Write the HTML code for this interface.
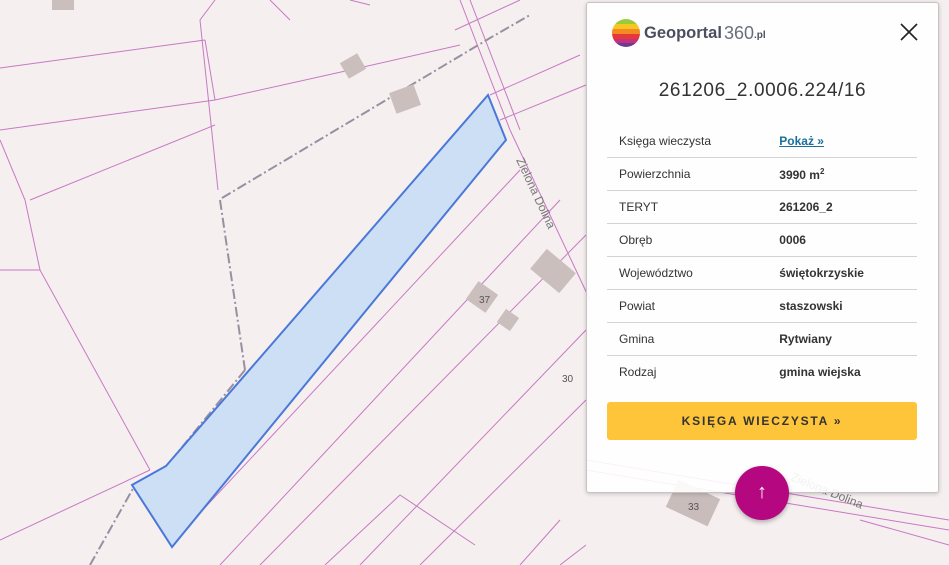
<!DOCTYPE html>
<html><head><meta charset="utf-8"><style>
body{margin:0;width:949px;height:565px;overflow:hidden;background:#f5eff0;font-family:"Liberation Sans",sans-serif;position:relative}
svg.map{position:absolute;left:0;top:0}
.panel{position:absolute;left:586px;top:2px;width:351px;height:489px;background:rgba(255,255,255,0.9);border:1px solid #c9c2c4;border-radius:3px;box-shadow:0 1px 4px rgba(0,0,0,.2)}
.logo{position:absolute;left:24px;top:14px;height:32px;display:flex;align-items:center}
.logo span{font-size:16.5px;color:#4a4f60;font-weight:bold;margin-left:3px}
.logo .n{font-weight:normal;font-size:18px;color:#6a6f80;margin-left:2px}
.logo .pl{font-size:10px;font-weight:bold;margin-left:0;margin-top:4px}
.close{position:absolute;left:313px;top:20px}
h1{position:absolute;top:77px;left:0;width:351px;text-align:center;margin:0;font-weight:normal;font-size:19px;color:#333;letter-spacing:.6px}
table{position:absolute;left:20px;top:122px;width:310px;border-collapse:collapse;font-size:12px;color:#333}
td{height:32px;border-bottom:1px solid #d3d3d3;padding:0 0 0 12px}
td:nth-child(2){font-weight:bold;padding-left:10px}
tr:last-child td{border-bottom:none}
a{color:#1a6f9a;font-weight:bold;text-decoration:underline}
.btn{position:absolute;left:20px;top:399px;width:310px;height:38px;background:#fec53a;border-radius:3px;text-align:center;line-height:38px;font-weight:bold;font-size:12px;letter-spacing:1.8px;color:#333}
.fab{position:absolute;left:735px;top:466px;width:54px;height:54px;border-radius:50%;background:#b5077f;box-shadow:0 2px 5px rgba(0,0,0,.3);color:#fff;text-align:center;line-height:52px;font-size:20px}
</style></head><body>
<svg class="map" width="949" height="565" viewBox="0 0 949 565">
<g stroke="#c879c3" stroke-width="1" fill="none">
<path d="M0 68 L205 40 M0 130 L215 100 L350 70 L460 45 M30 200 L215 125 M215 0 L200 20 L218 190 M205 40 L215 100 M0 270 L40 270 L150 470 M150 470 L0 540 M40 270 L25 200 L0 140 M270 0 L290 20 M350 0 L370 5"/>
<path d="M460 0 L510 130 L590 300 M470 0 L520 130 M455 30 L520 0 M490 95 L580 55 M500 120 L586 85"/>
<path d="M170 545 L520 170 M220 565 L560 200 M260 565 L586 235 M360 565 L586 330 M420 565 L586 400"/>
<path d="M325 565 L400 495 L475 545 M520 565 L560 520 M860 520 L949 545 M560 565 L586 545"/>
<path d="M586 460 L949 520 M586 470 L949 530"/>
</g>
<path d="M222 198 L490 38 L530 15 M220 200 L245 370 M245 370 L165 468 L135 485 M90 565 L135 485" stroke="#9a8fa0" stroke-width="2" stroke-dasharray="10 3 2 3" fill="none"/>
<rect x="52" y="0" width="22" height="10" fill="#cbbfbd"/>
<rect x="343" y="57" width="20" height="18" fill="#cbbfbd" transform="rotate(-30 353 66)"/>
<rect x="392" y="88" width="26" height="22" fill="#cbbfbd" transform="rotate(-20 405 99)"/>
<rect x="534" y="258" width="38" height="26" fill="#cbbfbd" transform="rotate(40 553 271)"/>
<rect x="470" y="286" width="24" height="22" fill="#cbbfbd" transform="rotate(35 482 297)"/>
<rect x="500" y="312" width="16" height="16" fill="#cbbfbd" transform="rotate(35 508 320)"/>
<rect x="670" y="488" width="46" height="30" fill="#c9bdbb" transform="rotate(25 693 503)"/>
<text x="479" y="303" font-size="10" fill="#555" font-family="Liberation Sans">37</text>
<text x="562" y="382" font-size="10" fill="#555" font-family="Liberation Sans">30</text>
<text x="688" y="510" font-size="10" fill="#555" font-family="Liberation Sans">33</text>
<text x="516" y="160" font-size="12" fill="#777" font-family="Liberation Sans" transform="rotate(65 516 160)">Zielona Dolina</text>
<text x="790" y="480" font-size="12" fill="#777" font-family="Liberation Sans" transform="rotate(22 790 480)">Zielona Dolina</text>
<polygon points="488,95 506,140 172,547 132,485 166,466" fill="#cddff4" stroke="#4a78d8" stroke-width="2"/>
</svg>
<div class="panel">
<div class="logo"><svg width="30" height="30" viewBox="0 0 30 30"><defs><clipPath id="c"><circle cx="15" cy="15" r="14"/></clipPath></defs><g clip-path="url(#c)"><rect y="0" width="30" height="6" fill="#9acb3c"/><rect y="6" width="30" height="5" fill="#f7c623"/><rect y="11" width="30" height="5" fill="#f38a22"/><rect y="16" width="30" height="5" fill="#e5383b"/><rect y="21" width="30" height="4" fill="#c6307e"/><rect y="25" width="30" height="5" fill="#6b3b8e"/></g></svg><span>Geoportal</span><span class="n">360</span><span class="pl">.pl</span></div>
<svg class="close" width="18" height="18"><path d="M1 1L17 17M17 1L1 17" stroke="#222" stroke-width="1.6"/></svg>
<h1>261206_2.0006.224/16</h1>
<table>
<tr><td>Księga wieczysta</td><td><a>Pokaż »</a></td></tr>
<tr><td>Powierzchnia</td><td>3990 m<sup style="font-size:8px">2</sup></td></tr>
<tr><td>TERYT</td><td>261206_2</td></tr>
<tr><td>Obręb</td><td>0006</td></tr>
<tr><td>Województwo</td><td>świętokrzyskie</td></tr>
<tr><td>Powiat</td><td>staszowski</td></tr>
<tr><td>Gmina</td><td>Rytwiany</td></tr>
<tr><td>Rodzaj</td><td>gmina wiejska</td></tr>
</table>
<div class="btn">KSIĘGA WIECZYSTA »</div>
</div>
<div class="fab">↑</div>
</body></html>
